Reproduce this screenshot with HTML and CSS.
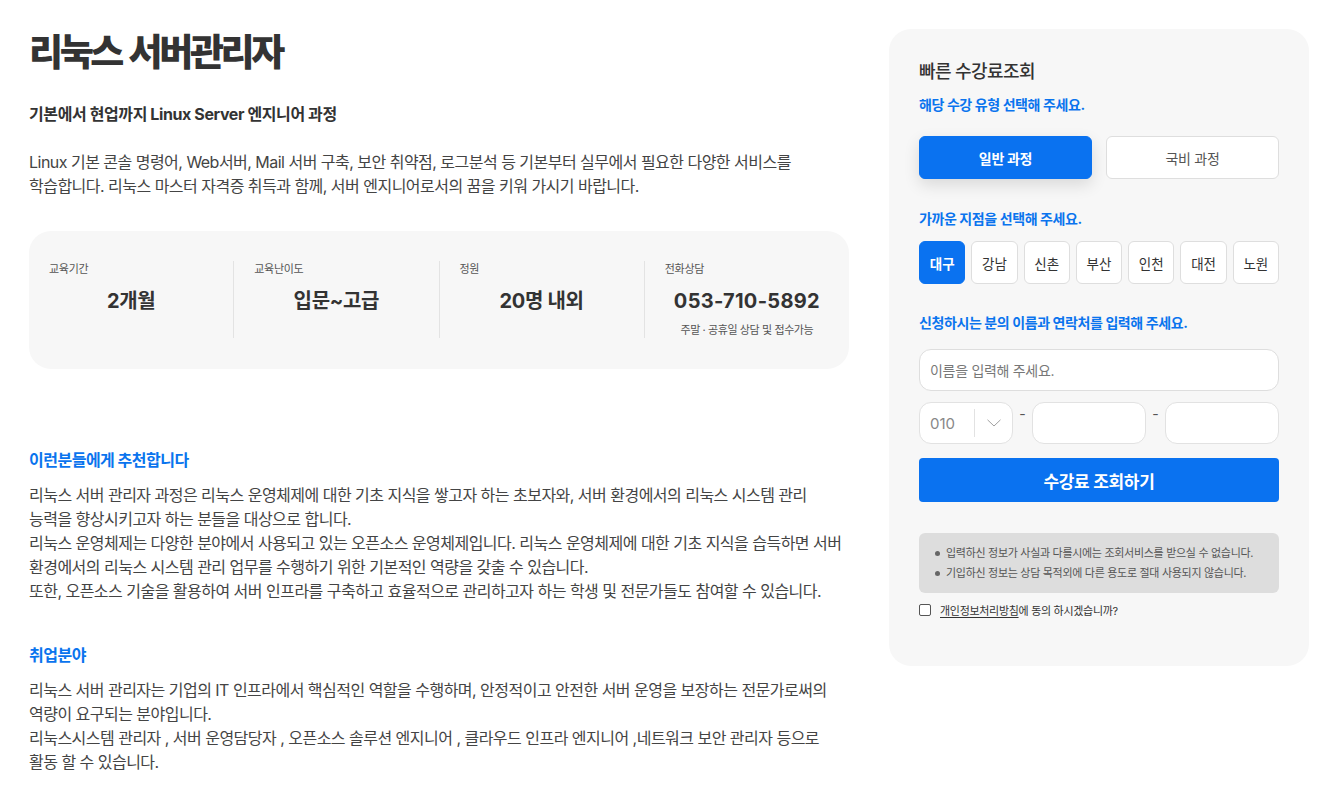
FILE: index.html
```html
<!DOCTYPE html>
<html lang="ko">
<head>
<meta charset="utf-8">
<title>리눅스 서버관리자</title>
<link rel="stylesheet" href="styles.css">
</head>
<body>
<div class="page">
  <main class="main">
    <h1 class="title">리눅스 서버관리자</h1>
    <p class="subtitle">기본에서 현업까지 Linux Server 엔지니어 과정</p>
    <p class="desc">Linux 기본 콘솔 명령어, Web서버, Mail 서버 구축, 보안 취약점, 로그분석 등 기본부터 실무에서 필요한 다양한 서비스를<br>학습합니다. 리눅스 마스터 자격증 취득과 함께, 서버 엔지니어로서의 꿈을 키워 가시기 바랍니다.</p>

    <div class="info">
      <div class="info-col">
        <span class="info-label">교육기간</span>
        <strong class="info-value">2개월</strong>
      </div>
      <div class="info-col">
        <span class="info-label">교육난이도</span>
        <strong class="info-value">입문~고급</strong>
      </div>
      <div class="info-col">
        <span class="info-label">정원</span>
        <strong class="info-value">20명 내외</strong>
      </div>
      <div class="info-col">
        <span class="info-label">전화상담</span>
        <strong class="info-value phone">053-710-5892</strong>
        <span class="info-note">주말 · 공휴일 상담 및 접수가능</span>
      </div>
    </div>

    <section class="section first">
      <h2 class="sec-title">이런분들에게 추천합니다</h2>
      <p class="sec-text">리눅스 서버 관리자 과정은 리눅스 운영체제에 대한 기초 지식을 쌓고자 하는 초보자와, 서버 환경에서의 리눅스 시스템 관리<br>능력을 향상시키고자 하는 분들을 대상으로 합니다.<br>리눅스 운영체제는 다양한 분야에서 사용되고 있는 오픈소스 운영체제입니다. 리눅스 운영체제에 대한 기초 지식을 습득하면 서버<br>환경에서의 리눅스 시스템 관리 업무를 수행하기 위한 기본적인 역량을 갖출 수 있습니다.<br>또한, 오픈소스 기술을 활용하여 서버 인프라를 구축하고 효율적으로 관리하고자 하는 학생 및 전문가들도 참여할 수 있습니다.</p>
    </section>

    <section class="section">
      <h2 class="sec-title">취업분야</h2>
      <p class="sec-text">리눅스 서버 관리자는 기업의 IT 인프라에서 핵심적인 역할을 수행하며, 안정적이고 안전한 서버 운영을 보장하는 전문가로써의<br>역량이 요구되는 분야입니다.<br>리눅스시스템 관리자 , 서버 운영담당자 , 오픈소스 솔루션 엔지니어 , 클라우드 인프라 엔지니어 ,네트워크 보안 관리자 등으로<br>활동 할 수 있습니다.</p>
    </section>
  </main>

  <aside class="panel">
    <h3 class="panel-title">빠른 수강료조회</h3>
    <p class="panel-label">해당 수강 유형 선택해 주세요.</p>
    <div class="type-row">
      <button class="type-btn active">일반 과정</button>
      <button class="type-btn">국비 과정</button>
    </div>

    <p class="panel-label branch-label">가까운 지점을 선택해 주세요.</p>
    <div class="branch-row">
      <button class="branch active">대구</button>
      <button class="branch">강남</button>
      <button class="branch">신촌</button>
      <button class="branch">부산</button>
      <button class="branch">인천</button>
      <button class="branch">대전</button>
      <button class="branch">노원</button>
    </div>

    <p class="panel-label apply-label">신청하시는 분의 이름과 연락처를 입력해 주세요.</p>
    <div class="name-input">이름을 입력해 주세요.</div>
    <div class="phone-row">
      <div class="select">
        <span class="select-val">010</span>
        <span class="select-sep"></span>
        <svg class="chev" width="14" height="8" viewBox="0 0 14 8"><path d="M0.5 0.8 L7 7 L13.5 0.8" fill="none" stroke="#a0a0a0" stroke-width="1"/></svg>
      </div>
      <span class="dash">-</span>
      <div class="phone-input"></div>
      <span class="dash">-</span>
      <div class="phone-input"></div>
    </div>
    <button class="submit">수강료 조회하기</button>

    <ul class="notice">
      <li>입력하신 정보가 사실과 다를시에는 조회서비스를 받으실 수 없습니다.</li>
      <li>기입하신 정보는 상담 목적외에 다른 용도로 절대 사용되지 않습니다.</li>
    </ul>
    <label class="agree"><span class="check"></span><span><u>개인정보처리방침</u>에 동의 하시겠습니까?</span></label>
  </aside>
</div>
</body>
</html>
```

FILE: styles.css
```css
* { box-sizing: border-box; }
html, body { margin: 0; padding: 0; background: #fff; }
body {
  font-family: "Inter", "Noto Sans CJK KR", sans-serif;
  color: #333;
}
.page {
  display: flex;
  align-items: flex-start;
  gap: 40px;
  padding: 29px 17px 0 29px;
}
.main { width: 820px; flex: none; }
.title {
  margin: 0;
  font-size: 37px;
  font-weight: 800;
  letter-spacing: -3.4px;
  word-spacing: 3px;
  line-height: 48px;
  color: #333;
}
.subtitle {
  margin: 26px 0 0;
  font-size: 16px;
  font-weight: 700;
  line-height: 22px;
  color: #333;
  letter-spacing: -0.4px;
}
.desc {
  margin: 25px 0 0;
  font-size: 16px;
  line-height: 24px;
  color: #444;
  letter-spacing: -0.52px;
}
.info {
  margin-top: 33px;
  background: #f7f7f7;
  border-radius: 22px;
  height: 138px;
  padding: 30px 0;
  display: flex;
}
.info-col {
  flex: 1;
  display: flex;
  flex-direction: column;
  align-items: center;
  padding: 0 20px;
  border-left: 1px solid #e3e3e3;
  height: 77px;
}
.info-col:first-child { border-left: none; }
.info-label {
  align-self: flex-start;
  font-size: 11px;
  line-height: 16px;
  color: #555;
  letter-spacing: -0.3px;
}
.info-value {
  margin-top: 11px;
  font-size: 20px;
  font-weight: 700;
  line-height: 26px;
  color: #333;
  letter-spacing: -0.3px;
}
.info-value.phone { letter-spacing: 0.3px; }
.info-note {
  margin-top: 8px;
  font-size: 11px;
  line-height: 16px;
  color: #555;
  letter-spacing: -0.4px;
}
.section.first { margin-top: 79px; }
.section { margin-top: 40px; }
.sec-title {
  margin: 0;
  font-size: 16px;
  font-weight: 700;
  line-height: 24px;
  color: #0a74ee;
  letter-spacing: -0.5px;
}
.sec-text {
  margin: 11px 0 0;
  font-size: 16px;
  line-height: 24px;
  color: #444;
  letter-spacing: -0.52px;
}

/* panel */
.panel {
  width: 420px;
  flex: none;
  background: #f7f7f7;
  border-radius: 22px;
  padding: 30px 30px 48px;
}
.panel-title {
  margin: 0;
  font-size: 18px;
  font-weight: 500;
  line-height: 26px;
  color: #333;
  letter-spacing: -0.6px;
}
.panel-label {
  margin: 10px 0 0;
  font-size: 14px;
  font-weight: 700;
  line-height: 20px;
  color: #0a74ee;
  letter-spacing: -0.4px;
}
.type-row {
  display: flex;
  gap: 14px;
  margin-top: 21px;
}
.type-btn {
  flex: 1;
  height: 43px;
  border-radius: 6px;
  border: 1px solid #dedede;
  background: #fff;
  font-family: inherit;
  font-size: 14px;
  color: #555;
  letter-spacing: -0.3px;
}
.type-btn.active {
  background: #0a72f0;
  border-color: #0a72f0;
  color: #fff;
  font-weight: 700;
  box-shadow: 0 6px 16px rgba(0,0,0,0.12);
}
.branch-label { margin-top: 30px; }
.branch-row {
  display: flex;
  gap: 6px;
  margin-top: 12px;
}
.branch {
  flex: 1;
  height: 43px;
  padding: 0;
  border-radius: 6px;
  border: 1px solid #dedede;
  background: #fff;
  font-family: inherit;
  font-size: 13.5px;
  color: #333;
}
.branch.active {
  background: #0a72f0;
  border-color: #0a72f0;
  color: #fff;
  font-weight: 700;
}
.apply-label { margin-top: 29px; }
.name-input {
  margin-top: 16px;
  height: 42px;
  background: #fff;
  border: 1px solid #dedede;
  border-radius: 12px;
  padding: 0 10px;
  display: flex;
  align-items: center;
  font-size: 14px;
  color: #777;
  letter-spacing: -0.3px;
}
.phone-row {
  display: flex;
  align-items: flex-start;
  margin-top: 11px;
}
.select {
  width: 94px;
  height: 42px;
  background: #fff;
  border: 1px solid #e2e2e2;
  border-radius: 12px;
  display: flex;
  align-items: center;
  padding-left: 10px;
}
.select-val { font-size: 15px; color: #888; width: 44px; }
.select-sep { width: 1px; height: 28px; background: #e2e2e2; }
.chev { margin-left: 12px; }
.dash {
  width: 19px;
  text-align: center;
  font-size: 14px;
  line-height: 20px;
  color: #555;
  margin-top: 2px;
}
.phone-input {
  flex: 1;
  height: 42px;
  background: #fff;
  border: 1px solid #e2e2e2;
  border-radius: 12px;
}
.submit {
  display: block;
  width: 100%;
  margin-top: 14px;
  height: 44px;
  border: none;
  border-radius: 4px;
  background: #0a72f0;
  color: #fff;
  font-family: inherit;
  font-size: 17px;
  font-weight: 700;
  letter-spacing: -0.3px;
}
.notice {
  list-style: none;
  margin: 31px 0 0;
  padding: 10px 16px;
  background: #dddddd;
  border-radius: 6px;
}
.notice li {
  position: relative;
  padding-left: 11px;
  font-size: 11px;
  line-height: 20px;
  color: #555;
  letter-spacing: -0.3px;
}
.notice li::before {
  content: "";
  position: absolute;
  left: 0;
  top: 8px;
  width: 5px;
  height: 5px;
  border-radius: 50%;
  background: #666;
}
.agree {
  display: flex;
  align-items: center;
  gap: 9px;
  margin-top: 9px;
  font-size: 11px;
  color: #333;
  letter-spacing: -0.3px;
}
.check {
  width: 12px;
  height: 12px;
  border: 1px solid #555;
  border-radius: 2px;
  background: #fff;
}
.agree u { text-underline-offset: 2px; }
```
